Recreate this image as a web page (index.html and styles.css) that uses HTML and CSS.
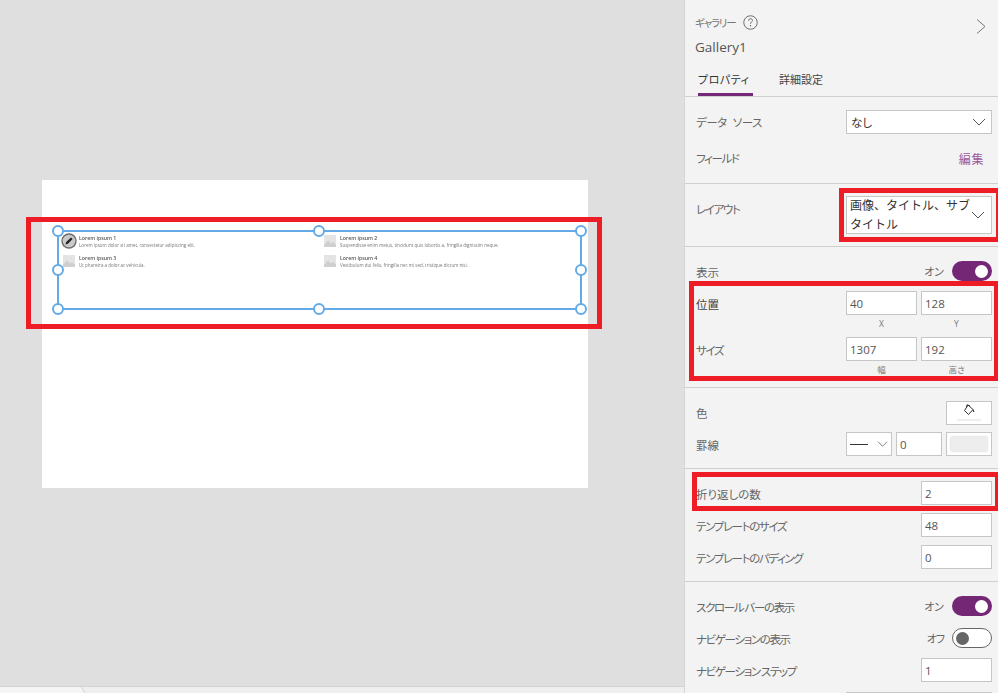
FILE: index.html
```html
<!DOCTYPE html>
<html lang="ja">
<head>
<meta charset="utf-8">
<title>Gallery1</title>
<link rel="stylesheet" href="styles.css">
</head>
<body>
<div class="app">
  <main class="stage">
    <div class="artboard">
      <div class="gallery">
        <div class="item">
          <span class="thumb thumb-first">
            <svg class="thumb-img" viewBox="0 0 12 12"><rect width="12" height="12" fill="#e4e4e4"/><path d="M0 10 L4 5.5 L7 8.5 L9 7 L12 9.5 V12 H0Z" fill="#cfcfcf"/></svg>
            <svg class="pen" viewBox="0 0 16 16"><circle cx="8" cy="8" r="7" fill="#c9c9c9" stroke="#6a6a6a" stroke-width="1.3"/><path d="M4.5 11.5 L5.2 9 L10 4.4 L11.6 6 L6.9 10.8Z" fill="#222"/></svg>
          </span>
          <div class="item-text"><div class="item-title">Lorem ipsum 1</div><div class="item-sub">Lorem ipsum dolor sit amet, consectetur adipiscing elit.</div></div>
        </div>
        <div class="item">
          <span class="thumb"><svg class="thumb-img" viewBox="0 0 12 12"><rect width="12" height="12" fill="#e4e4e4"/><path d="M0 10 L4 5.5 L7 8.5 L9 7 L12 9.5 V12 H0Z" fill="#cfcfcf"/></svg></span>
          <div class="item-text"><div class="item-title">Lorem ipsum 2</div><div class="item-sub">Suspendisse enim metus, tincidunt quis lobortis a, fringilla dignissim neque.</div></div>
        </div>
        <div class="item">
          <span class="thumb"><svg class="thumb-img" viewBox="0 0 12 12"><rect width="12" height="12" fill="#e4e4e4"/><path d="M0 10 L4 5.5 L7 8.5 L9 7 L12 9.5 V12 H0Z" fill="#cfcfcf"/></svg></span>
          <div class="item-text"><div class="item-title">Lorem ipsum 3</div><div class="item-sub">Ut pharetra a dolor ac vehicula.</div></div>
        </div>
        <div class="item">
          <span class="thumb"><svg class="thumb-img" viewBox="0 0 12 12"><rect width="12" height="12" fill="#e4e4e4"/><path d="M0 10 L4 5.5 L7 8.5 L9 7 L12 9.5 V12 H0Z" fill="#cfcfcf"/></svg></span>
          <div class="item-text"><div class="item-title">Lorem ipsum 4</div><div class="item-sub">Vestibulum dui felis, fringilla nec mi sed, tristique dictum nisi.</div></div>
        </div>
        <i class="handle h-tl"></i><i class="handle h-tc"></i><i class="handle h-tr"></i>
        <i class="handle h-ml"></i><i class="handle h-mr"></i>
        <i class="handle h-bl"></i><i class="handle h-bc"></i><i class="handle h-br"></i>
      </div>
    </div>
    <div class="tabbar"><div class="tabbar-tab"></div></div>
  </main>

  <aside class="panel">
    <header class="head">
      <div class="head-top">
        <span class="kind">ギャラリー</span>
        <svg class="help" viewBox="0 0 16 16"><circle cx="8" cy="8" r="7.2" fill="none" stroke="#555" stroke-width=".9"/><path d="M5.9 6.2 C5.9 4.8 6.9 4 8 4 C9.2 4 10.1 4.8 10.1 5.9 C10.1 7.4 8 7.5 8 9.3" fill="none" stroke="#555" stroke-width=".9"/><circle cx="8" cy="11.4" r=".7" fill="#555"/></svg>
        <svg class="next" viewBox="0 0 10 16"><path d="M1 1 L9 8 L1 15" fill="none" stroke="#777" stroke-width="1"/></svg>
      </div>
      <div class="name">Gallery1</div>
      <nav class="tabs"><span class="tab tab-on">プロパティ</span><span class="tab">詳細設定</span></nav>
    </header>

    <section class="sec sec-data">
      <div class="row"><span class="lbl lbl-flush lbl-source">データ ソース</span>
        <div class="box select wide"><span>なし</span><svg class="chev" viewBox="0 0 14 8"><path d="M1 1 L7 7 L13 1" fill="none" stroke="#555" stroke-width="1"/></svg></div>
      </div>
      <div class="row"><span class="lbl lbl-flush kana">フィールド</span><span class="edit">編集</span></div>
    </section>

    <section class="sec sec-layout">
      <div class="row row-tall"><span class="lbl lbl-up kana">レイアウト</span>
        <div class="box select wide tall"><span class="multi">画像、タイトル、サブタイトル</span><svg class="chev" viewBox="0 0 14 8"><path d="M1 1 L7 7 L13 1" fill="none" stroke="#555" stroke-width="1"/></svg></div>
      </div>
    </section>

    <section class="sec sec-geo">
      <div class="row row-toggle"><span class="lbl">表示</span><div class="toggle-wrap"><span class="state">オン</span><span class="toggle on"><i></i></span></div></div>
      <div class="row row-pos"><span class="lbl dark">位置</span><div class="pair"><div class="box num">40</div><div class="box num">128</div></div></div>
      <div class="caps"><span>X</span><span>Y</span></div>
      <div class="row"><span class="lbl kana">サイズ</span><div class="pair"><div class="box num">1307</div><div class="box num">192</div></div></div>
      <div class="caps"><span>幅</span><span>高さ</span></div>
    </section>

    <section class="sec sec-color">
      <div class="row"><span class="lbl lbl-flush">色</span>
        <div class="box colorbtn">
          <svg class="bucket" viewBox="0 0 12 12"><path d="M5 1 L10 5.5 L5.5 10.5 L1.5 6.5Z" fill="#fff" stroke="#333" stroke-width="1"/><path d="M3.5 3.5 L4 .8 L7 2" fill="none" stroke="#333" stroke-width="1"/><path d="M10 5 L11.5 7.5 L10 8Z" fill="#222"/></svg>
          <i class="colorline"></i>
        </div>
      </div>
      <div class="row"><span class="lbl">罫線</span>
        <div class="borders">
          <div class="box select style"><i class="dash"></i><svg class="chev" viewBox="0 0 14 8"><path d="M1 1 L7 7 L13 1" fill="none" stroke="#555" stroke-width="1"/></svg></div>
          <div class="box num small">0</div>
          <div class="box swatch"><i></i></div>
        </div>
      </div>
    </section>

    <section class="sec sec-wrap">
      <div class="row"><span class="lbl">折り返しの数</span><div class="box num">2</div></div>
      <div class="row"><span class="lbl kana">テンプレートのサイズ</span><div class="box num">48</div></div>
      <div class="row"><span class="lbl kana">テンプレートのパディング</span><div class="box num">0</div></div>
    </section>

    <section class="sec sec-nav">
      <div class="row row-toggle"><span class="lbl kana">スクロール バーの表示</span><div class="toggle-wrap"><span class="state">オン</span><span class="toggle on"><i></i></span></div></div>
      <div class="row row-toggle"><span class="lbl kana">ナビゲーションの表示</span><div class="toggle-wrap"><span class="state state-off">オフ</span><span class="toggle off"><i></i></span></div></div>
      <div class="row"><span class="lbl kana">ナビゲーション ステップ</span><div class="box num">1</div></div>
      <div class="row"><span class="lbl"></span><div class="box wide"></div></div>
    </section>
  </aside>
</div>

<div class="mark mark-canvas"></div>
<div class="mark mark-layout"></div>
<div class="mark mark-geo"></div>
<div class="mark mark-wrap"></div>
</body>
</html>
```

FILE: styles.css
```css
* { box-sizing: border-box; }
html, body { margin: 0; padding: 0; height: 100%; overflow: hidden; }
body {
  font-family: "Open Sans", "Noto Sans CJK JP", sans-serif;
  color: #555;
  background: #dfdfdf;
}
.app { display: flex; width: 998px; height: 693px; }

/* canvas */
.stage {
  position: relative;
  width: 684px;
  flex: none;
  background: #dfdfdf;
  padding: 180px 0 0 42px;
}
.artboard {
  width: 546px;
  height: 308px;
  background: #fff;
  padding: 50px 0 0 15px;
}
.gallery {
  position: relative;
  width: 525px;
  height: 80px;
  border: 2px solid #64aae6;
  display: grid;
  grid-template-columns: 261px 261px;
  grid-auto-rows: 20px;
  align-content: start;
  padding-top: 1px;
  font-family: "Open Sans", sans-serif;
}
.item { display: flex; padding-left: 2px; position: relative; }
.thumb { width: 18px; flex: none; position: relative; padding: 2px 0 0 2px; display: block; }
.thumb-img { width: 12px; height: 12px; display: block; filter: blur(.3px); }
.thumb-first .pen { position: absolute; left: 0; top: 0; width: 16px; height: 16px; filter: blur(.2px); }
.item-text { padding-top: 2px; filter: blur(.25px); white-space: nowrap; }
.item-title { font-size: 5.2px; line-height: 7px; font-weight: 600; color: #555; }
.item-sub { font-size: 4.5px; line-height: 6.5px; color: #777; }

.handle {
  position: absolute;
  width: 12px; height: 12px;
  border-radius: 50%;
  background: #fff;
  border: 2px solid #64aae6;
  margin: -6px 0 0 -6px;
}
.h-tl { left: -1px; top: -1px; } .h-tc { left: calc(50% - 1px); top: -1px; } .h-tr { left: calc(100% + 1px); top: -1px; }
.h-ml { left: -1px; top: 50%; } .h-mr { left: calc(100% + 1px); top: 50%; }
.h-bl { left: -1px; top: calc(100% + 1px); } .h-bc { left: calc(50% - 1px); top: calc(100% + 1px); } .h-br { left: calc(100% + 1px); top: calc(100% + 1px); }

.tabbar {
  position: absolute;
  left: 0; right: 0; bottom: 0;
  height: 7px;
  background: #efefef;
  border-top: 1px solid #d2d2d2;
  overflow: hidden;
}
.tabbar-tab {
  width: 87px; height: 6px;
  margin-left: -5px;
  background: #f5f5f5;
  border-right: 1px solid #d2d2d2;
  transform: skewX(28deg);
  transform-origin: top left;
}

/* panel */
.panel {
  width: 314px;
  flex: none;
  height: 693px;
  overflow: hidden;
  background: #f3f3f3;
  border-left: 1px solid #d6d6d6;
  font-family: "Noto Sans CJK JP", "Open Sans", sans-serif;
  font-size: 11.5px;
  font-feature-settings: "palt";
}
.head { height: 97px; border-bottom: 1px solid #cfcfcf; padding: 12px 0 0 10px; position: relative; }
.head-top { display: flex; align-items: center; height: 20px; gap: 8px; }
.kind { font-size: 10.5px; color: #777; letter-spacing: -1.2px; }
.help { width: 15px; height: 15px; }
.next { position: absolute; right: 12px; top: 18px; width: 10px; height: 17px; }
.name { font-family: "Open Sans", sans-serif; font-size: 13.5px; color: #555; height: 20px; line-height: 20px; margin-top: 5px; }
.tabs { display: flex; gap: 26px; margin-top: 6px; padding-left: 3px; }
.tab { height: 33px; line-height: 32px; font-size: 11px; color: #444; white-space: nowrap; }
.tab-on { border-bottom: 3px solid #742774; width: 55px; color: #333; letter-spacing: .5px; }

.sec { border-bottom: 1px solid #cfcfcf; padding: 0 6px 0 11px; display: flex; flex-direction: column; }
.row { display: flex; align-items: center; justify-content: space-between; height: 24px; flex: none; }
.lbl { color: #666; white-space: nowrap; font-size: 11.5px; padding-top: 2px; }
.lbl.dark { color: #444; }
.lbl-up { padding: 0 0 12px; }
.lbl-flush { padding-top: 0; }
.lbl-source { letter-spacing: -.5px; word-spacing: 4px; }
.kana { letter-spacing: -1.35px; }

.sec-data { height: 87px; padding-top: 13px; gap: 12px; }
.sec-layout { height: 63px; padding-top: 12px; }
.row-tall { height: 38px; }
.sec-geo { height: 141px; padding-top: 14px; }
.row-toggle { height: 20px; }
.row-pos { margin-top: 10px; }
.sec-color { height: 81px; padding-top: 13px; gap: 7px; }
.sec-wrap { height: 113px; padding-top: 12px; gap: 8px; }
.sec-nav { border-bottom: 0; padding-top: 14px; gap: 12px; }
.sec-nav .row:nth-child(n+3) { margin-top: -2px; }

.box {
  background: #fff;
  border: 1px solid #c6c6c6;
  height: 24px;
  color: #444;
  font-family: "Open Sans", "Noto Sans CJK JP", sans-serif;
  font-size: 11.5px;
  display: flex;
  align-items: center;
  padding: 0 4px;
}
.num { width: 71px; padding-left: 3px; font-size: 11.5px; color: #555; }
.wide { width: 146px; }
.select { justify-content: space-between; font-family: "Noto Sans CJK JP", sans-serif; color: #333; }
.tall { height: 38px; padding: 0 5px 0 3px; }
.multi { font-size: 12px; line-height: 19px; width: 124px; color: #333; font-feature-settings: normal; padding-bottom: 2px; }
.chev { width: 14px; height: 8px; flex: none; margin-right: 1px; }
.edit { color: #9c5a9c; font-size: 12px; margin-right: 8px; letter-spacing: .6px; }
.pair { display: flex; gap: 4px; }
.caps { display: flex; justify-content: flex-end; gap: 4px; height: 22px; flex: none; font-size: 8.5px; color: #777; font-family: "Open Sans", "Noto Sans CJK JP", sans-serif; }
.caps span { width: 71px; text-align: center; line-height: 18px; }

.toggle-wrap { display: flex; align-items: center; gap: 8px; }
.state { font-size: 11px; color: #666; }
.state-off { letter-spacing: -1px; }
.toggle { width: 40px; height: 20px; border-radius: 10px; display: flex; align-items: center; }
.toggle i { width: 13px; height: 13px; border-radius: 50%; display: block; }
.toggle.on { background: #742774; justify-content: flex-end; padding-right: 4px; }
.toggle.on i { background: #fff; }
.toggle.off { background: #fff; border: 1px solid #666; padding-left: 3px; }
.toggle.off i { background: #666; }

.colorbtn { width: 46px; position: relative; justify-content: center; padding: 0 0 6px; }
.bucket { width: 12px; height: 12px; }
.colorline { position: absolute; left: 10px; right: 10px; bottom: 3px; height: 2px; background: #eee; }
.borders { display: flex; gap: 4px; }
.style { width: 46px; padding: 0 3px 0 3px; }
.dash { width: 18px; height: 1px; background: #333; display: block; }
.style .chev { width: 11px; height: 6px; margin: 0; }
.small { width: 46px; }
.swatch { width: 46px; padding: 4px; }
.swatch i { display: block; width: 100%; height: 100%; background: #eeeded; box-shadow: 0 0 2px #bbb; }

/* annotation rectangles laid over the screenshot */
.mark { position: absolute; border: 5px solid #ee1c25; pointer-events: none; }
.mark-canvas { left: 26px; top: 217px; width: 576px; height: 112px; }
.mark-layout { left: 839px; top: 188px; width: 162px; height: 54px; }
.mark-geo { left: 689px; top: 281px; width: 310px; height: 100px; }
.mark-wrap { left: 692px; top: 472px; width: 308px; height: 39px; }
```
